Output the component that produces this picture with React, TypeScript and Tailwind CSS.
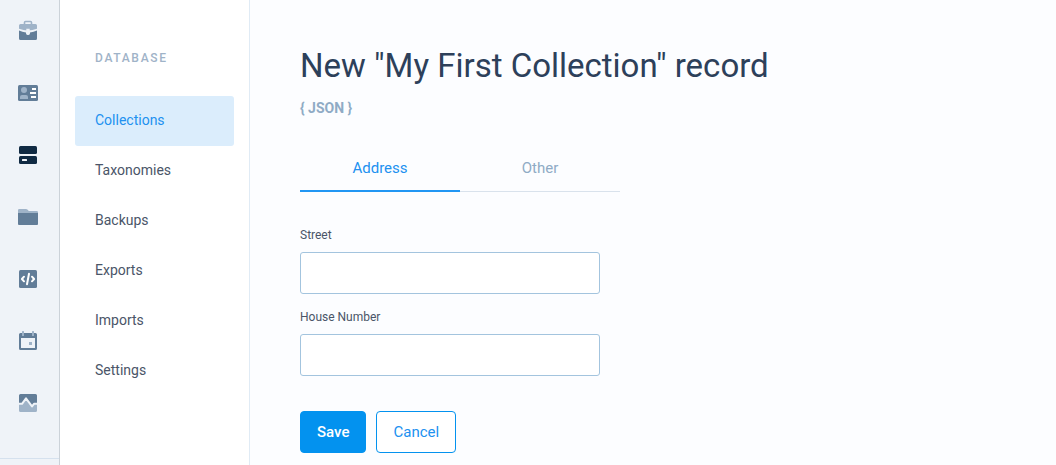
import React, { useState } from "react";

const DARK = "#627d98";
const LIGHT = "#9fb3c8";
const BG = "#eff3f8";

const railItems: { name: string; icon: React.ReactNode }[] = [
  {
    name: "Projects",
    icon: (
      <>
        <path d="M8.500 5.500V3.500a1 1 0 0 1 1-1h5a1 1 0 0 1 1 1v2" fill="none" stroke={LIGHT} strokeWidth="1.600" />
        <path d="M4.500 5h15A1.500 1.500 0 0 1 21 6.500v3.300a25 25 0 0 1-18 0V6.500A1.500 1.500 0 0 1 4.500 5z" fill={LIGHT} />
        <path d="M3 11.500a22 22 0 0 0 7 2V14a2 2 0 0 0 4 0v-.500a22 22 0 0 0 7-2V19.500a1.500 1.500 0 0 1-1.500 1.500h-15A1.500 1.500 0 0 1 3 19.500z" fill={DARK} />
        <path d="M10.300 9.800h3.400V14a1.700 1.700 0 0 1-3.400 0z" fill={BG} />
      </>
    ),
  },
  {
    name: "Users",
    icon: (
      <>
        <rect x="2" y="4" width="20" height="16" rx="1.500" fill={DARK} />
        <circle cx="8" cy="9" r="3" fill={LIGHT} />
        <path d="M4 18v-2a2 2 0 0 1 2-2h4a2 2 0 0 1 2 2v2z" fill={LIGHT} />
        <path d="M16 7h4v2h-4zM14 11h6v2h-6zM15 15h5v2h-5z" fill="#fff" />
      </>
    ),
  },
  {
    name: "Database",
    icon: (
      <>
        <rect x="3" y="3" width="18" height="8" rx="1.500" fill="#102a43" />
        <rect x="3" y="13" width="18" height="8" rx="1.500" fill="#102a43" />
        <rect x="6" y="16" width="5" height="2" rx="0.500" fill={BG} />
      </>
    ),
  },
  {
    name: "Files",
    icon: (
      <>
        <path d="M2 9V5.300A1.300 1.300 0 0 1 3.300 4H10a2 2 0 0 1 1.400.600L12.800 6h7.900A1.300 1.300 0 0 1 22 7.300V9z" fill={LIGHT} />
        <path d="M2 8h20v11a1 1 0 0 1-1 1H3a1 1 0 0 1-1-1z" fill={DARK} />
      </>
    ),
  },
  {
    name: "Functions",
    icon: (
      <>
        <rect x="3" y="3" width="18" height="18" rx="1.500" fill={DARK} />
        <path d="M8 9.700L5.900 12 8 14.300M16 9.700l2.100 2.300-2.100 2.300M13 6.800l-2 10.400" fill="none" stroke="#fff" strokeWidth="2" strokeLinecap="round" strokeLinejoin="round" />
      </>
    ),
  },
  {
    name: "Schedule",
    icon: (
      <>
        <path fillRule="evenodd" d="M4.500 4h15A1.500 1.500 0 0 1 21 5.500v14a1.500 1.500 0 0 1-1.500 1.500h-15A1.500 1.500 0 0 1 3 19.500v-14A1.500 1.500 0 0 1 4.500 4zM5 9v10h14V9z" fill={DARK} />
        <rect x="6" y="2" width="2" height="5" rx="0.500" fill={LIGHT} />
        <rect x="16" y="2" width="2" height="5" rx="0.500" fill={LIGHT} />
        <rect x="13" y="13" width="3" height="3" fill={LIGHT} />
      </>
    ),
  },
  {
    name: "Activity",
    icon: (
      <>
        <path d="M3 12.500V4.500A1.500 1.500 0 0 1 4.500 3h15A1.500 1.500 0 0 1 21 4.500v8h-3l-2 3-6-8-3.500 5z" fill={DARK} />
        <path d="M3 12.500h3.500l3.500-5 6 8 2-3h3v7a1.500 1.500 0 0 1-1.500 1.500h-15A1.500 1.500 0 0 1 3 19.500z" fill={LIGHT} />
        <path d="M3 12.800h3L10 7.400l6 8 2-2.600h3" fill="none" stroke={BG} strokeWidth="2" strokeLinejoin="round" />
      </>
    ),
  },
];

const menu = ["Collections", "Taxonomies", "Backups", "Exports", "Imports", "Settings"];
const tabs = ["Address", "Other"];

function Field({ id, label }: { id: string; label: string }) {
  return (
    <div className="flex flex-col gap-2">
      <label htmlFor={id} className="text-xs leading-[18px] text-[#4a5568]">
        {label}
      </label>
      <input
        id={id}
        type="text"
        className="h-[42px] w-full rounded-[3px] border border-[#a3c4de] bg-white px-3 text-sm text-[#243b53] outline-none focus:border-[#2196f3]"
      />
    </div>
  );
}

export default function App() {
  const [tab, setTab] = useState("Address");
  return (
    <div className="flex min-h-screen bg-[#fcfdff] font-['Roboto',sans-serif] text-[#2d405a]">
      <nav aria-label="Main" className="flex w-[60px] shrink-0 flex-col border-r border-[#cbd2d9] bg-[#eff3f8]">
        {railItems.map((item) => (
          <a key={item.name} href="#" aria-label={item.name} className="flex h-[62px] items-center pl-4">
            <svg viewBox="0 0 24 24" className="size-6" aria-hidden="true">
              {item.icon}
            </svg>
          </a>
        ))}
        <div className="mt-6 border-t border-[#d5e1ee]" />
      </nav>

      <aside className="w-[190px] shrink-0 border-r border-[#e0ebf5] bg-white px-[15px] pt-12">
        <h2 className="px-5 text-xs leading-5 font-medium tracking-[0.14em] text-[#9fb3c8]">DATABASE</h2>
        <ul className="mt-7">
          {menu.map((name, i) => (
            <li key={name}>
              <a
                href="#"
                className={
                  i === 0
                    ? "block rounded-[3px] bg-[#dbedfc] px-5 pt-3.5 pb-4 text-sm text-[#2191f0]"
                    : "block rounded-[3px] px-5 pt-3.5 pb-4 text-sm text-[#4a5568]"
                }
              >
                {name}
              </a>
            </li>
          ))}
        </ul>
      </aside>

      <main className="min-w-0 flex-1 px-[50px] pt-11 pb-3">
        <h1 className="text-[33px] leading-[44px] font-normal">New "My First Collection" record</h1>
        <a href="#" className="mt-2 block w-fit text-sm leading-6 font-bold text-[#8fabc5]">
          {"{ JSON }"}
        </a>

        <div role="tablist" className="mt-6 flex max-w-80 border-b border-[#d9e2ec]">
          {tabs.map((name) => (
            <button
              key={name}
              type="button"
              role="tab"
              aria-selected={tab === name}
              onClick={() => setTab(name)}
              className={
                tab === name
                  ? "-mb-px h-12 flex-1 border-b-2 border-[#2196f3] pt-0.5 text-[15px] text-[#2191f0]"
                  : "-mb-px h-12 flex-1 border-b-2 border-transparent pt-0.5 text-[15px] text-[#8fabc5]"
              }
            >
              {name}
            </button>
          ))}
        </div>

        <form className="mt-[34px] max-w-[300px]" onSubmit={(e) => e.preventDefault()}>
          <div className="flex flex-col gap-[14px]">
            <Field id="street" label="Street" />
            <Field id="house-number" label="House Number" />
          </div>
          <div className="mt-[35px] flex gap-[10px]">
            <button type="submit" className="h-[42px] rounded border border-[#0392ef] bg-[#0392ef] px-4 text-[15px] font-medium text-white">
              Save
            </button>
            <button type="button" className="h-[42px] rounded border border-[#0392ef] bg-white px-4 text-[15px] text-[#2191f0]">
              Cancel
            </button>
          </div>
        </form>
      </main>
    </div>
  );
}
